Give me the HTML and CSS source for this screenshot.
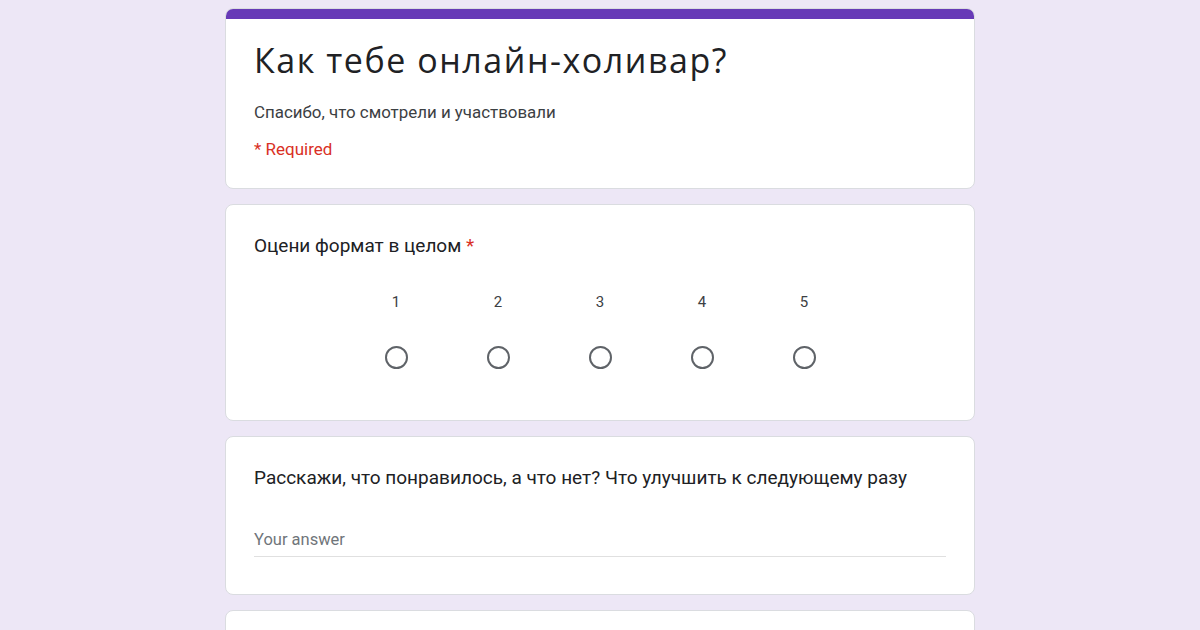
FILE: index.html
```html
<!DOCTYPE html>
<html lang="ru">
<head>
<meta charset="utf-8">
<link rel="stylesheet" href="styles.css">
</head>
<body>
<main class="form">
  <section class="card header-card">
    <div class="accent"></div>
    <div class="header-body">
      <h1 class="title">Как тебе онлайн-холивар?</h1>
      <p class="desc">Спасибо, что смотрели и участвовали</p>
      <p class="required-note">* Required</p>
    </div>
  </section>

  <section class="card question q-scale">
    <div class="q-title">Оцени формат в целом <span class="star">*</span></div>
    <div class="scale">
      <div class="opt"><span class="num">1</span><span class="radio"></span></div>
      <div class="opt"><span class="num">2</span><span class="radio"></span></div>
      <div class="opt"><span class="num">3</span><span class="radio"></span></div>
      <div class="opt"><span class="num">4</span><span class="radio"></span></div>
      <div class="opt"><span class="num">5</span><span class="radio"></span></div>
    </div>
  </section>

  <section class="card question q-text">
    <div class="q-title">Расскажи, что понравилось, а что нет? Что улучшить к следующему разу</div>
    <div class="answer">Your answer</div>
  </section>

  <section class="card question q-last"></section>
</main>
</body>
</html>
```

FILE: styles.css
```css
* { box-sizing: border-box; }
html, body { margin: 0; padding: 0; }
body {
  background: #ede7f6;
  font-family: Roboto, "Liberation Sans", sans-serif;
  color: #202124;
  height: 630px;
  overflow: hidden;
}
.form {
  width: 750px;
  margin: 0 auto;
  padding-top: 8px;
  display: flex;
  flex-direction: column;
  gap: 15px;
}
.card {
  background: #fff;
  border: 1px solid #dadce0;
  border-radius: 8px;
  overflow: hidden;
}
.accent {
  height: 10px;
  background: #673ab7;
}
.header-body {
  padding: 19px 28px 29px;
}
.title {
  margin: 0;
  font-family: "Open Sans", Roboto, sans-serif;
  font-weight: 400;
  font-size: 34px;
  line-height: 44px;
  color: #202124;
  letter-spacing: 1.55px;
}
.desc {
  margin: 20px 0 0;
  font-size: 16.9px;
  line-height: 20px;
  color: #3c4043;
}
.required-note {
  margin: 17px 0 0;
  font-size: 17px;
  line-height: 20px;
  color: #d93025;
}
.question {
  padding: 29px 28px 0;
}
.q-title {
  font-size: 19px;
  line-height: 24px;
  color: #202124;
  letter-spacing: 0;
}
.star { color: #d93025; }
.scale {
  display: flex;
  justify-content: center;
  padding: 34px 0 51px;
}
.opt {
  width: 102px;
  display: flex;
  flex-direction: column;
  align-items: center;
  gap: 34px;
}
.num {
  font-size: 15px;
  line-height: 20px;
  color: #3c4043;
}
.radio {
  width: 23px;
  height: 23px;
  border: 2px solid #5f6368;
  border-radius: 50%;
}
.q-text { padding-bottom: 37px; }
.answer {
  margin-top: 40px;
  padding-bottom: 6px;
  border-bottom: 1px solid #e0e0e0;
  font-size: 16.5px;
  line-height: 20px;
  color: #70757a;
}
.q-last { height: 19px; }
```
